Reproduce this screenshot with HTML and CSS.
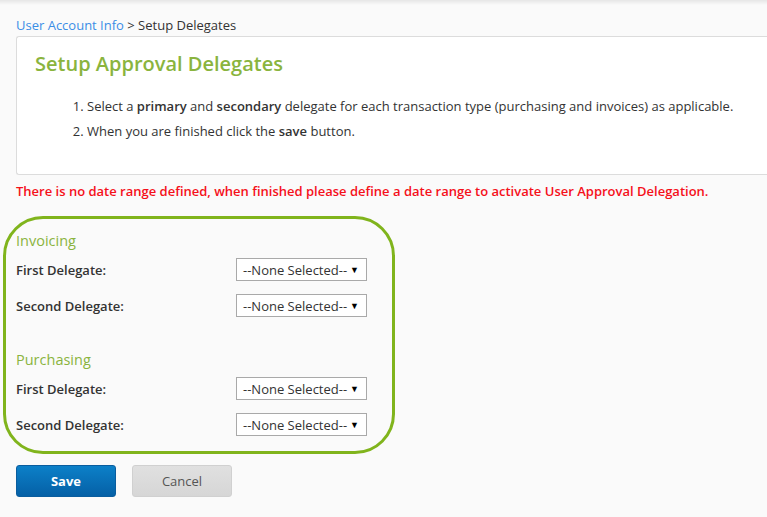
FILE: index.html
```html
<!DOCTYPE html>
<html>
<head>
<meta charset="utf-8">
<link rel="stylesheet" href="styles.css">
</head>
<body>
<div class="topshade"></div>
<div class="page">
  <div class="breadcrumb"><a class="crumb-link">User Account Info</a> &gt; Setup Delegates</div>
  <div class="card">
    <h1 class="title">Setup Approval Delegates</h1>
    <ol class="steps">
      <li>Select a <b>primary</b> and <b>secondary</b> delegate for each transaction type (purchasing and invoices) as applicable.</li>
      <li>When you are finished click the <b>save</b> button.</li>
    </ol>
  </div>
  <div class="warning">There is no date range defined, when finished please define a date range to activate User Approval Delegation.</div>
  <div class="delegates">
    <div class="group">
      <div class="group-title">Invoicing</div>
      <div class="row"><span class="label">First Delegate:</span><div class="select"><span>--None Selected--</span><span class="arrow">▼</span></div></div>
      <div class="row"><span class="label">Second Delegate:</span><div class="select"><span>--None Selected--</span><span class="arrow">▼</span></div></div>
    </div>
    <div class="group group-second">
      <div class="group-title">Purchasing</div>
      <div class="row"><span class="label">First Delegate:</span><div class="select"><span>--None Selected--</span><span class="arrow">▼</span></div></div>
      <div class="row"><span class="label">Second Delegate:</span><div class="select"><span>--None Selected--</span><span class="arrow">▼</span></div></div>
    </div>
  </div>
  <div class="buttons">
    <button class="btn btn-save">Save</button>
    <button class="btn btn-cancel">Cancel</button>
  </div>
</div>
</body>
</html>
```
FILE: styles.css
```css
html, body {
  margin: 0;
  padding: 0;
  background: #fafafa;
  overflow: hidden;
}
body {
  font-family: "Open Sans", "Liberation Sans", sans-serif;
  font-size: 13px;
  color: #333;
  width: 767px;
  height: 517px;
}
.topshade {
  height: 5px;
  background: linear-gradient(#e6e6e6, #fafafa);
}
.page {
  padding: 0 0 0 16px;
  overflow: hidden;
}
.breadcrumb {
  margin-top: 11px;
  line-height: 18px;
  height: 18px;
  color: #333;
}
.crumb-link {
  color: #3a8ee6;
}
.card {
  margin-top: 2px;
  background: #fff;
  border: 1px solid #dcdcdc;
  border-right: none;
  border-radius: 3px 0 0 3px;
  height: 137px;
  padding: 0;
}
.title {
  margin: 13px 0 0 18px;
  font-size: 20px;
  line-height: 28px;
  font-weight: 600;
  color: #8ab43e;
}
.steps {
  margin: 16px 0 0 0;
  padding-left: 70px;
  line-height: 25px;
}
.steps b {
  font-weight: 600;
}
.warning {
  margin-top: 7px;
  line-height: 18px;
  color: #f5101a;
  font-weight: 600;
}
.delegates {
  margin: 16px 0 0 -13px;
  width: 376px;
  height: 232px;
  border: 3px solid #80b41c;
  border-radius: 40px;
  padding: 0 0 0 10px;
  box-sizing: content-box;
}
.group {
  margin-top: 12px;
}
.group-second {
  margin-top: 33px;
}
.group-title {
  font-size: 14.5px;
  line-height: 20px;
  color: #8ab43e;
  margin-bottom: 7px;
}
.row {
  display: flex;
  align-items: center;
  height: 23px;
  margin-bottom: 13px;
}
.group .row:last-child {
  margin-bottom: 0;
}
.label {
  width: 220px;
  font-weight: 600;
  color: #333;
}
.select {
  height: 21px;
  border: 1px solid #a9a9a9;
  background: #fff;
  display: flex;
  align-items: center;
  justify-content: space-between;
  padding: 0 7px 0 6px;
  box-sizing: content-box;
  width: 116px;
  color: #333;
}
.arrow {
  font-size: 9px;
  color: #000;
}
.buttons {
  margin-top: 11px;
  display: flex;
  gap: 16px;
}
.btn {
  width: 100px;
  height: 32px;
  border-radius: 3px;
  font-family: "Open Sans", "Liberation Sans", sans-serif;
  font-size: 13px;
  cursor: pointer;
}
.btn-save {
  background: linear-gradient(#0c80c8, #0560a6);
  border: 1px solid #0a5d9e;
  color: #fff;
  font-weight: 700;
}
.btn-cancel {
  background: linear-gradient(#e0e0e0, #d6d6d6);
  border: 1px solid #d0d0d0;
  color: #555;
  font-weight: 400;
}
```
